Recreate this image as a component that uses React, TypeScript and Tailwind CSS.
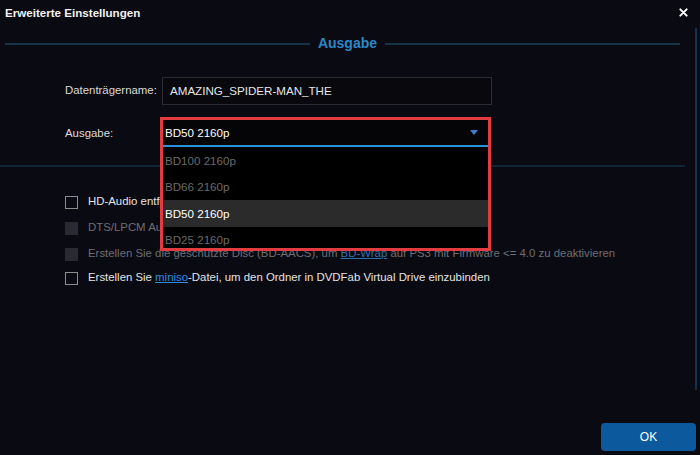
import { ReactNode } from "react";

const options = ["BD100 2160p", "BD66 2160p", "BD50 2160p", "BD25 2160p"];

function Checkbox({ disabled, tight, children }: { disabled?: boolean; tight?: boolean; children: ReactNode }) {
  return (
    <div className={`flex items-center gap-[10px] pl-[65px] ${tight ? "h-[22px]" : "h-[26px]"}`}>
      {disabled ? (
        <span className="h-[13px] w-[13px] shrink-0 bg-[#2a2a33]" />
      ) : (
        <span className="h-[13px] w-[13px] shrink-0 border border-[#8c8c8c]" />
      )}
      <span className={`whitespace-nowrap text-[11.4px] ${disabled ? "text-[#6e6e74]" : "text-[#e4e4e4]"}`}>
        {children}
      </span>
    </div>
  );
}

export default function App() {
  return (
    <div className="relative h-[455px] w-[700px] overflow-hidden bg-[#0a0a12] font-['Liberation_Sans',Arial,sans-serif]">
      {/* title bar */}
      <div className="flex h-[25px] items-center justify-between pl-[5px] pr-[12px]">
        <span className="text-[11.6px] font-bold text-[#f2f2f2]">Erweiterte Einstellungen</span>
        <svg width="9" height="9" viewBox="0 0 10 10" className="text-white">
          <path d="M1.5 1.5 L8.5 8.5 M8.5 1.5 L1.5 8.5" stroke="currentColor" strokeWidth="2.2" strokeLinecap="round" />
        </svg>
      </div>

      {/* scrollbar line */}
      <div className="absolute right-[3px] top-[28px] h-[362px] w-[2px] bg-[#123252]" />

      {/* section heading */}
      <div className="mt-[8px] flex items-center pl-[5px] pr-[20px]">
        <div className="h-[2px] flex-1 bg-[#163447]" />
        <span className="px-[8px] text-[14px] font-bold text-[#2c87c9]">Ausgabe</span>
        <div className="h-[2px] w-[295px] bg-[#163447]" />
      </div>

      {/* form */}
      <div className="mt-[23px] flex flex-col gap-[15px] pl-[65px]">
        <div className="flex items-center">
          <span className="w-[97px] text-[11.4px] text-[#dcdcdc]">Datenträgername:</span>
          <div className="flex h-[28px] w-[330px] items-center border border-[#2b2b33] bg-[#08080d] px-[7px] text-[11.6px] text-[#e6e6e6]">
            AMAZING_SPIDER-MAN_THE
          </div>
        </div>
        <div className="flex items-center">
          <span className="w-[98px] text-[11.4px] text-[#dcdcdc]">Ausgabe:</span>
          <div className="relative w-[325px]">
            <div className="flex h-[27px] items-center justify-between border-b-2 border-[#2a90d8] bg-[#050508] pl-[2px] pr-[10px] text-[11.6px] text-white">
              BD50 2160p
              <svg width="8" height="5" viewBox="0 0 8 5">
                <path d="M0 0 H8 L4 5 Z" fill="#3b7fd2" />
              </svg>
            </div>
            <div className="absolute inset-x-0 top-full z-10 h-[102px] overflow-hidden bg-black">
              {options.map((o, i) => (
                <div
                  key={o}
                  className={`flex h-[26.5px] items-center pl-[2px] text-[11.6px] ${
                    i === 2 ? "bg-[#2b2b2b] text-white" : "text-[#6a6a6a]"
                  }`}
                >
                  {o}
                </div>
              ))}
            </div>
            <div className="pointer-events-none absolute -left-[3px] -right-[3px] -top-[3px] z-20 h-[134px] border-[3px] border-[#e23b40]" />
          </div>
        </div>
      </div>

      {/* faint divider under dropdown */}
      <div className="mr-[15px] mt-[18px] h-[2px] bg-[#0f2636]" />

      {/* checkboxes */}
      <div className="mt-[22px] flex flex-col">
        <Checkbox>HD-Audio entfernen (nur Kern-Audio behalten)</Checkbox>
        <Checkbox disabled>DTS/LPCM Audio in AC3 konvertieren</Checkbox>
        <Checkbox disabled>
          Erstellen Sie die geschützte Disc (BD-AACS), um <span className="text-[#2a6fb0] underline">BD-Wrap</span> auf PS3 mit Firmware &lt;= 4.0 zu deaktivieren
        </Checkbox>
        <Checkbox tight>
          Erstellen Sie <span className="text-[#2f8be0] underline">miniso</span>-Datei, um den Ordner in DVDFab Virtual Drive einzubinden
        </Checkbox>
      </div>

      {/* footer */}
      <div className="absolute bottom-[4px] right-[4px]">
        <button className="flex h-[28px] w-[95px] items-center justify-center rounded-[4px] bg-[#0d599d] text-[12px] text-white">
          OK
        </button>
      </div>
    </div>
  );
}
